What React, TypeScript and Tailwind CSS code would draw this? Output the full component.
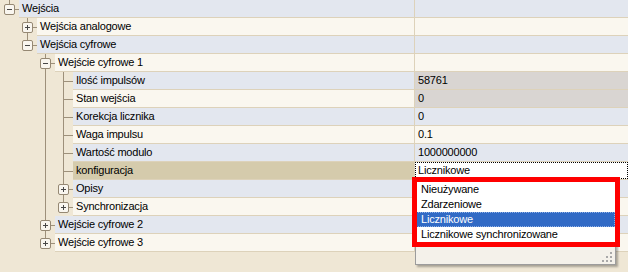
import React from 'react';

type Kind = 'open' | 'closed' | 'leaf';

type Wiersz = {
  nazwa: string;
  wartosc?: string;
  poziom: number;
  rodzaj: Kind;
  gora: boolean;
  dol: boolean;
  prowadnice: number[];
  tylkoOdczyt?: boolean;
  wybrany?: boolean;
};

const LINIA = '#9d907a';

// Drzewo właściwości – kolejność jak w oknie konfiguracji
const wiersze: Wiersz[] = [
  { nazwa: 'Wejścia', poziom: 0, rodzaj: 'open', gora: true, dol: false, prowadnice: [] },
  { nazwa: 'Wejścia analogowe', poziom: 1, rodzaj: 'closed', gora: true, dol: true, prowadnice: [] },
  { nazwa: 'Wejścia cyfrowe', poziom: 1, rodzaj: 'open', gora: true, dol: false, prowadnice: [] },
  { nazwa: 'Wejście cyfrowe 1', poziom: 2, rodzaj: 'open', gora: true, dol: true, prowadnice: [] },
  { nazwa: 'Ilość impulsów', wartosc: '58761', poziom: 3, rodzaj: 'leaf', gora: true, dol: true, prowadnice: [2], tylkoOdczyt: true },
  { nazwa: 'Stan wejścia', wartosc: '0', poziom: 3, rodzaj: 'leaf', gora: true, dol: true, prowadnice: [2], tylkoOdczyt: true },
  { nazwa: 'Korekcja licznika', wartosc: '0', poziom: 3, rodzaj: 'leaf', gora: true, dol: true, prowadnice: [2] },
  { nazwa: 'Waga impulsu', wartosc: '0.1', poziom: 3, rodzaj: 'leaf', gora: true, dol: true, prowadnice: [2] },
  { nazwa: 'Wartość modulo', wartosc: '1000000000', poziom: 3, rodzaj: 'leaf', gora: true, dol: true, prowadnice: [2] },
  { nazwa: 'konfiguracja', wartosc: 'Licznikowe', poziom: 3, rodzaj: 'leaf', gora: true, dol: true, prowadnice: [2], wybrany: true },
  { nazwa: 'Opisy', poziom: 3, rodzaj: 'closed', gora: true, dol: true, prowadnice: [2] },
  { nazwa: 'Synchronizacja', poziom: 3, rodzaj: 'closed', gora: true, dol: false, prowadnice: [2] },
  { nazwa: 'Wejście cyfrowe 2', poziom: 2, rodzaj: 'closed', gora: true, dol: true, prowadnice: [] },
  { nazwa: 'Wejście cyfrowe 3', poziom: 2, rodzaj: 'closed', gora: true, dol: false, prowadnice: [] },
];

const opcje = ['Nieużywane', 'Zdarzeniowe', 'Licznikowe', 'Licznikowe synchronizowane'];

function Galaz({ w }: { w: Wiersz }) {
  const szer = 19 + 18 * w.poziom;
  const cx = 9.5 + 18 * w.poziom;
  const bx = 4.5 + 18 * w.poziom;
  const pudelko = w.rodzaj !== 'leaf';
  return (
    <svg width={szer} height={18} className="block shrink-0">
      {w.prowadnice.map((g) => (
        <line key={g} x1={9.5 + 18 * g} y1={0} x2={9.5 + 18 * g} y2={18} stroke={LINIA} />
      ))}
      {w.gora && <line x1={cx} y1={0} x2={cx} y2={pudelko ? 4 : 10} stroke={LINIA} />}
      {w.dol && <line x1={cx} y1={pudelko ? 15 : 9} x2={cx} y2={18} stroke={LINIA} />}
      <line x1={pudelko ? bx + 10.5 : cx} y1={9.5} x2={szer} y2={9.5} stroke={LINIA} />
      {pudelko && (
        <g>
          <rect x={bx} y={4.5} width={10} height={10} rx={1.5} fill="#f9f6ef" stroke="#958873" />
          <line x1={bx + 2.5} y1={9.5} x2={bx + 7.5} y2={9.5} stroke="#474747" />
          {w.rodzaj === 'closed' && <line x1={cx} y1={7} x2={cx} y2={12} stroke="#474747" />}
        </g>
      )}
    </svg>
  );
}

function WierszSiatki({ w, i }: { w: Wiersz; i: number }) {
  const tlo = i % 2 === 0 ? 'bg-[#e3e7ef]' : 'bg-[#faf7ef]';
  const tloNazwy = w.wybrany ? 'bg-[#d5cbac]' : tlo;
  const tloWartosci = w.tylkoOdczyt ? 'bg-[#d9d5d2]' : tlo;
  return (
    <div className="flex h-[18px]">
      <Galaz w={w} />
      <div className="flex flex-1 border-b border-[#ddd2ba]">
        <div className={`flex-1 truncate pl-[3px] leading-[17px] ${tloNazwy}`}>{w.nazwa}</div>
        <div className="w-px bg-[#ddd2ba]" />
        {w.wybrany ? (
          <div className="w-[213px] border border-dotted border-black bg-white pl-[2px] leading-[15px]">
            {w.wartosc}
          </div>
        ) : (
          <div className={`w-[213px] pl-[3px] leading-[17px] ${tloWartosci}`}>{w.wartosc}</div>
        )}
      </div>
    </div>
  );
}

export default function App() {
  return (
    <div className="relative h-[272px] w-[628px] overflow-hidden bg-[#efe7d5] font-['Liberation_Sans',Arial,sans-serif] text-[11px] tracking-[-0.2px] text-black">
      {wiersze.map((w, i) => (
        <WierszSiatki key={i} w={w} i={i} />
      ))}

      {/* Rozwinięta lista wyboru */}
      <div className="absolute left-[415px] top-[180px] flex h-[85px] w-[201px] flex-col border border-[#9c9c9c] bg-[#f4f1ea] shadow-[2px_2px_2px_rgba(0,0,0,0.3)]">
        <div className="flex flex-col bg-white pt-px">
          {opcje.map((o) => (
            <div
              key={o}
              className={`h-[15px] pl-[5px] leading-[15px] ${
                o === 'Licznikowe' ? 'bg-[#316ac5] text-white outline-1 -outline-offset-1 outline-dotted outline-[#8fb0e6]' : ''
              }`}
            >
              {o}
            </div>
          ))}
          <div className="h-[2px]" />
        </div>
        <div className="flex flex-1 items-end justify-end pb-px pr-[2px]">
          <svg width={11} height={11}>
            {[
              [8, 0],
              [4, 4],
              [8, 4],
              [0, 8],
              [4, 8],
              [8, 8],
            ].map(([x, y], k) => (
              <rect key={k} x={x} y={y} width={2} height={2} fill="#a8a8a8" />
            ))}
          </svg>
        </div>
      </div>

      {/* Czerwone obramowanie */}
      <div className="absolute left-[412px] top-[177px] h-[70px] w-[208px] border-[5px] border-[#ff0000]" />
    </div>
  );
}
